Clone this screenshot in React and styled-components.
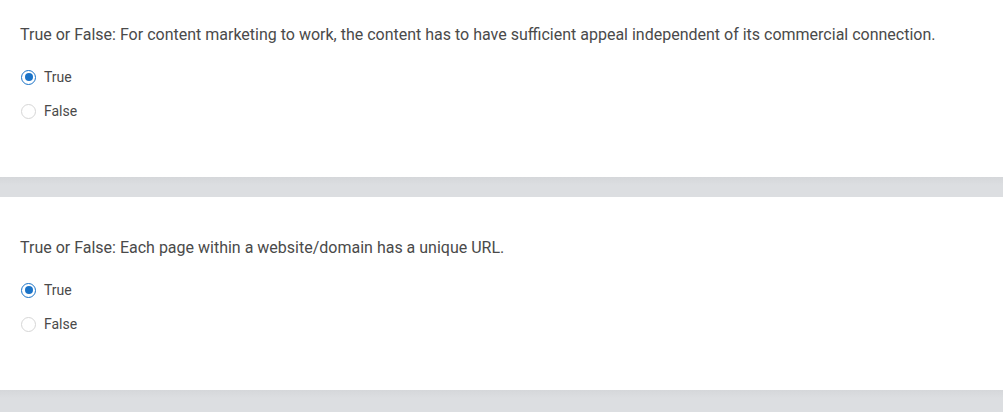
import React, { useState } from "react";
import styled, { createGlobalStyle } from "styled-components";

const GlobalStyle = createGlobalStyle`
  html, body {
    margin: 0;
    padding: 0;
    background: #dcdee1;
    font-family: Roboto, "Liberation Sans", Arial, sans-serif;
  }
  * { box-sizing: border-box; }
`;

const questions = [
  {
    id: "q1",
    text: "True or False: For content marketing to work, the content has to have sufficient appeal independent of its commercial connection.",
    answer: "True",
  },
  {
    id: "q2",
    text: "True or False: Each page within a website/domain has a unique URL.",
    answer: "True",
  },
];

const App = () => {
  const [answers, setAnswers] = useState(
    Object.fromEntries(questions.map((q) => [q.id, q.answer]))
  );

  return (
    <>
      <GlobalStyle />
      <Page>
        {questions.map((q) => (
          <React.Fragment key={q.id}>
            <Card>
              <Question>{q.text}</Question>
              <Options>
                {["True", "False"].map((opt) => (
                  <Option key={opt}>
                    <HiddenInput
                      type="radio"
                      name={q.id}
                      checked={answers[q.id] === opt}
                      onChange={() => setAnswers({ ...answers, [q.id]: opt })}
                    />
                    <Circle $checked={answers[q.id] === opt} />
                    <Label>{opt}</Label>
                  </Option>
                ))}
              </Options>
            </Card>
            <Gap />
          </React.Fragment>
        ))}
      </Page>
    </>
  );
};

export default App;

// page is scrolled a little, so the first card's top is cut off
const Page = styled.div`
  margin-top: -16px;
  display: flex;
  flex-direction: column;
`;

const Card = styled.div`
  background: #ffffff;
  padding: 40px 20px 49px 20px;
  display: flex;
  flex-direction: column;
`;

const Question = styled.div`
  font-size: 16px;
  line-height: 22px;
  color: #4a4a4a;
`;

const Options = styled.div`
  margin-top: 14px;
  display: flex;
  flex-direction: column;
`;

const Option = styled.label`
  height: 34px;
  display: flex;
  align-items: center;
  gap: 8px;
  padding-left: 1px;
  cursor: pointer;
`;

const HiddenInput = styled.input`
  display: none;
`;

const Circle = styled.span`
  width: 15px;
  height: 15px;
  border-radius: 50%;
  border: 1.5px solid ${({ $checked }) => ($checked ? "#1a73c8" : "#d6d6d6")};
  display: flex;
  align-items: center;
  justify-content: center;
  background: #fff;

  &::after {
    content: "";
    width: 8px;
    height: 8px;
    border-radius: 50%;
    background: ${({ $checked }) => ($checked ? "#1a73c8" : "transparent")};
  }
`;

const Label = styled.span`
  font-size: 14px;
  color: #4a4a4a;
`;

const Gap = styled.div`
  height: 20px;
  background: linear-gradient(#d5d7da, #dcdee1 8px, #dcdee1);
`;
